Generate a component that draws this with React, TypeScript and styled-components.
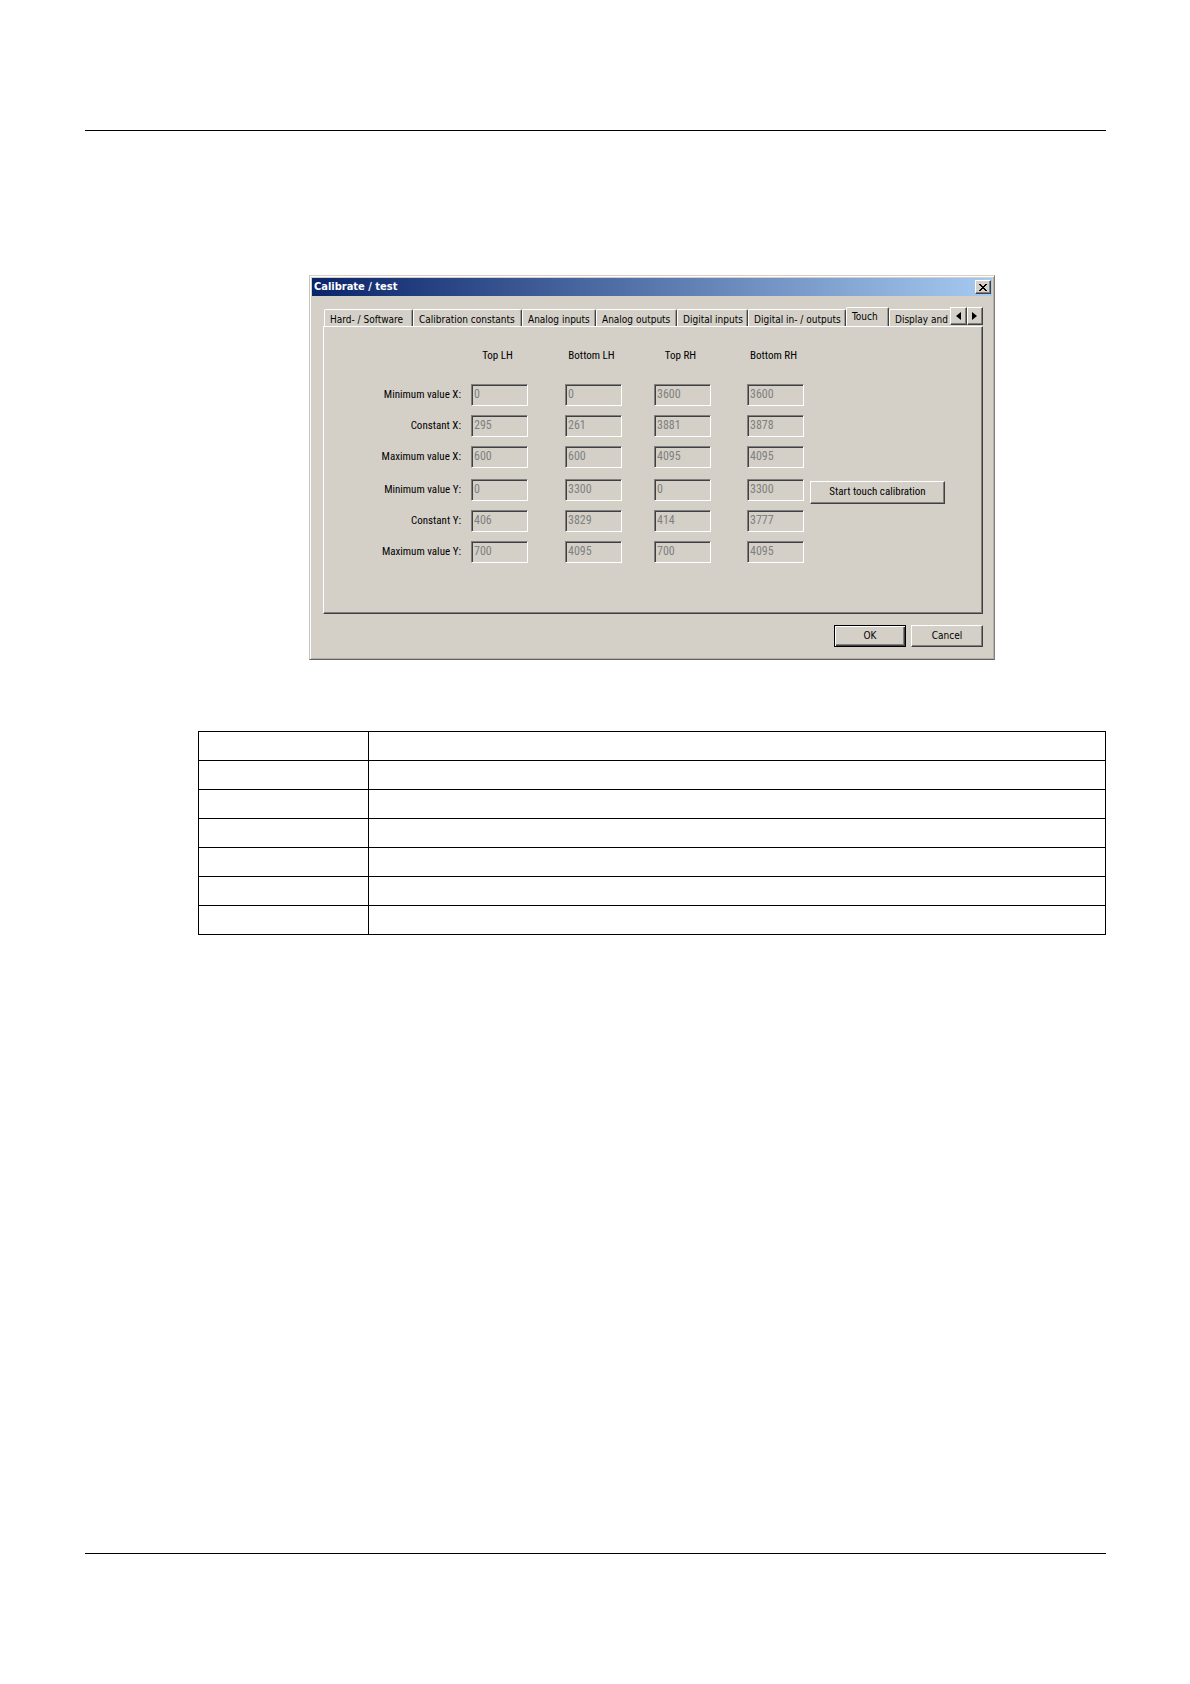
import React from "react";
import styled, { createGlobalStyle, css } from "styled-components";

const uiFont = '"DejaVu Sans Condensed", "DejaVu Sans", sans-serif';
const formFont = '"Roboto Condensed", Roboto, "Liberation Sans", sans-serif';

const GlobalStyle = createGlobalStyle`
  *, *::before, *::after { box-sizing: border-box; }
  body { margin: 0; background: #fff; color: #000; font-family: ${uiFont}; }
`;

const raised = css`
  border: 1px solid;
  border-color: #fff #404040 #404040 #fff;
  box-shadow: inset -1px -1px 0 #808080;
  background: #d4d0c8;
`;

const Page = styled.div`
  display: flex;
  flex-direction: column;
  min-height: 100vh;
  padding: 130px 84px 130px 85px;
`;

const Rule = styled.hr`
  width: 100%;
  height: 1px;
  margin: 0;
  border: 0;
  background: #000;
`;

const Main = styled.main`
  display: flex;
  flex: 1;
  flex-direction: column;
  gap: 71px;
  padding: 144px 0 144px 113px;
`;

const Dialog = styled.section`
  align-self: flex-start;
  width: 686px;
  max-width: 100%;
  margin-left: 111px;
  padding: 1px;
  border: 1px solid;
  border-color: #d4d0c8 #808080 #606060 #c8c4bc;
  box-shadow: inset 1px 1px 0 #fff, inset -1px -1px 0 #b4b0a8;
  background: #d4d0c8;
`;

const TitleBar = styled.header`
  display: flex;
  align-items: center;
  justify-content: space-between;
  height: 18px;
  margin: 1px;
  padding: 0 1px 0 2px;
  background: linear-gradient(90deg, #0a246a, #a6caf0);
`;

const Title = styled.h1`
  margin: 0;
  color: #fff;
  font-size: 11px;
  line-height: 18px;
`;

const IconButton = styled.button<{ $w: number; $h: number }>`
  ${raised}
  display: flex;
  flex: none;
  align-items: center;
  justify-content: center;
  width: ${(p) => p.$w}px;
  height: ${(p) => p.$h}px;
  padding: 0 1px 0 0;
`;

const Content = styled.div`
  padding: 10px 10px 11px 12px;
`;

const TabBar = styled.div`
  display: flex;
  height: 19px;
  padding-left: 1px;
`;

const TabList = styled.div`
  display: flex;
  flex: 1;
  align-items: flex-end;
  min-width: 0;
  overflow: hidden;
`;

const Tab = styled.button<{ $width: number; $active?: boolean }>`
  flex: none;
  width: ${(p) => p.$width}px;
  height: ${(p) => (p.$active ? 20 : 17)}px;
  margin-bottom: ${(p) => (p.$active ? -1 : 0)}px;
  padding: ${(p) => (p.$active ? "0 0 2px 5px" : "2px 0 0 5px")};
  border: 1px solid;
  border-color: #fff #404040 transparent #fff;
  border-bottom: 0;
  border-radius: 2px 2px 0 0;
  box-shadow: inset -1px 0 0 #a09c94;
  background: #d4d0c8;
  color: #000;
  font: 10px/16px ${uiFont};
  text-align: left;
  white-space: nowrap;
`;

const Panel = styled.div`
  display: flex;
  gap: 6px;
  height: 288px;
  padding: 21px 36px 0 10px;
  border: 1px solid;
  border-color: #fff #404040 #404040 #fff;
  box-shadow: inset -1px -1px 0 #808080;
  font-family: ${formFont};
`;

const Calibration = styled.div`
  display: flex;
  flex-direction: column;
`;

const gridRow = css`
  display: grid;
  grid-template-columns: 137px 94px 89px 93px 57px;
`;

const HeadRow = styled.div`
  ${gridRow}
  margin-bottom: 20px;
`;

const ColumnHead = styled.span`
  width: 53px;
  font-size: 11px;
  line-height: 16px;
  text-align: center;
  white-space: nowrap;
`;

const Group = styled.div`
  display: flex;
  flex-direction: column;
  gap: 9px;
  margin-bottom: 11px;
`;

const FieldRow = styled.div`
  ${gridRow}
  align-items: center;
`;

const RowLabel = styled.span`
  padding-right: 10px;
  font-size: 11px;
  line-height: 16px;
  text-align: right;
  white-space: nowrap;
`;

const Value = styled.input`
  width: 57px;
  height: 22px;
  padding: 0 2px 3px;
  border: 1px solid;
  border-color: #808080 #fff #fff #808080;
  border-radius: 0;
  box-shadow: inset 1px 1px 0 #404040;
  background: #d4d0c8;
  color: #808080;
  font: 12px ${formFont};
`;

const Side = styled.div`
  padding-top: 132px;
`;

const PushButton = styled.button<{ $width: number; $default?: boolean }>`
  ${raised}
  width: ${(p) => p.$width}px;
  height: 22px;
  padding: 0;
  color: #000;
  font: 10px/16px ${uiFont};
  ${(p) =>
    p.$default &&
    css`
      border-color: #000;
      box-shadow: inset 1px 1px 0 #fff, inset -1px -1px 0 #404040, inset -2px -2px 0 #808080;
    `}
`;

const StartButton = styled(PushButton)`
  height: 23px;
  font-family: ${formFont};
  font-size: 11px;
`;

const Actions = styled.footer`
  display: flex;
  justify-content: flex-end;
  gap: 5px;
  padding-top: 11px;
`;

const Grid = styled.table`
  width: 100%;
  border-collapse: collapse;
  table-layout: fixed;

  td {
    height: 29px;
    padding: 0;
    border: 1px solid #000;
  }
  td:first-child { width: 170px; }
`;

const tabs = [
  { name: "Hard- / Software", width: 89 },
  { name: "Calibration constants", width: 109 },
  { name: "Analog inputs", width: 74 },
  { name: "Analog outputs", width: 81 },
  { name: "Digital inputs", width: 71 },
  { name: "Digital in- / outputs", width: 98 },
  { name: "Touch", width: 43 },
  { name: "Display and more", width: 97 },
];

const columns = ["Top LH", "Bottom LH", "Top RH", "Bottom RH"];

const groups = [
  [
    { name: "Minimum value X:", values: ["0", "0", "3600", "3600"] },
    { name: "Constant X:", values: ["295", "261", "3881", "3878"] },
    { name: "Maximum value X:", values: ["600", "600", "4095", "4095"] },
  ],
  [
    { name: "Minimum value Y:", values: ["0", "3300", "0", "3300"] },
    { name: "Constant Y:", values: ["406", "3829", "414", "3777"] },
    { name: "Maximum value Y:", values: ["700", "4095", "700", "4095"] },
  ],
];

export default function App() {
  return (
    <Page>
      <GlobalStyle />
      <Rule />
      <Main>
        <Dialog role="dialog" aria-labelledby="dialog-title">
          <TitleBar>
            <Title id="dialog-title">Calibrate / test</Title>
            <IconButton $w={16} $h={14} aria-label="Close">
              <svg width="8" height="7" viewBox="0 0 8 7" shapeRendering="crispEdges">
                <path d="M0 0h2v1h1v1h2V1h1V0h2v1H7v1H6v1H5v1h1v1h1v1h1v1H6V6H5V5H3v1H2v1H0V6h1V5h1V4h1V3H2V2H1V1H0z" />
              </svg>
            </IconButton>
          </TitleBar>
          <Content>
            <TabBar>
              <TabList role="tablist">
                {tabs.map((t) => (
                  <Tab
                    key={t.name}
                    role="tab"
                    aria-selected={t.name === "Touch"}
                    $width={t.width}
                    $active={t.name === "Touch"}
                  >
                    {t.name}
                  </Tab>
                ))}
              </TabList>
              <IconButton $w={17} $h={18} aria-label="Scroll tabs left">
                <svg width="5" height="8" viewBox="0 0 5 8">
                  <path d="M5 0v8L0 4z" />
                </svg>
              </IconButton>
              <IconButton $w={16} $h={18} aria-label="Scroll tabs right">
                <svg width="5" height="8" viewBox="0 0 5 8">
                  <path d="M0 0v8l5-4z" />
                </svg>
              </IconButton>
            </TabBar>
            <Panel role="tabpanel" aria-label="Touch">
              <Calibration>
                <HeadRow>
                  <span />
                  {columns.map((c, i) => (
                    <ColumnHead key={c} id={`col-${i}`}>
                      {c}
                    </ColumnHead>
                  ))}
                </HeadRow>
                {groups.map((rows, g) => (
                  <Group key={g}>
                    {rows.map((row, r) => (
                      <FieldRow key={row.name}>
                        <RowLabel id={`row-${g}-${r}`}>{row.name}</RowLabel>
                        {row.values.map((v, i) => (
                          <Value
                            key={i}
                            disabled
                            defaultValue={v}
                            aria-labelledby={`row-${g}-${r} col-${i}`}
                          />
                        ))}
                      </FieldRow>
                    ))}
                  </Group>
                ))}
              </Calibration>
              <Side>
                <StartButton $width={135}>Start touch calibration</StartButton>
              </Side>
            </Panel>
            <Actions>
              <PushButton $width={72} $default>
                OK
              </PushButton>
              <PushButton $width={72}>Cancel</PushButton>
            </Actions>
          </Content>
        </Dialog>
        <Grid>
          <tbody>
            {Array.from({ length: 7 }, (_, i) => (
              <tr key={i}>
                <td />
                <td />
              </tr>
            ))}
          </tbody>
        </Grid>
      </Main>
      <Rule />
    </Page>
  );
}
